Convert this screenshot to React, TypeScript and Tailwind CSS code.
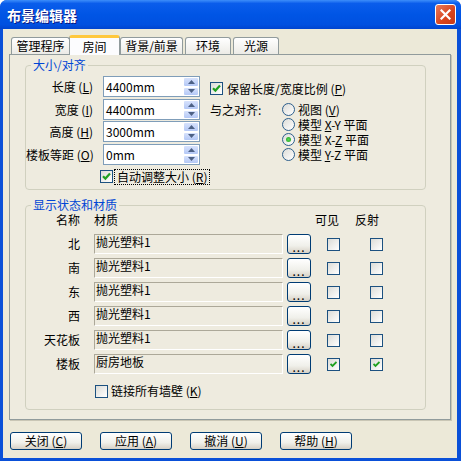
import React from 'react';

// XP-стиль: общие куски
function CheckBox({ checked = false, small = false }: { checked?: boolean; small?: boolean }) {
  return (
    <span className="w-[13px] h-[13px] shrink-0 border border-[#1C5180] bg-[linear-gradient(135deg,#DCDCD7,#FFFFFF)] flex items-center justify-center">
      {checked &&
        (small ? (
          <svg width="7" height="7" viewBox="0 0 7 7">
            <path d="M0.5 3 L2.5 5 L6.5 1" stroke="#21A121" strokeWidth="1.8" fill="none" />
          </svg>
        ) : (
          <svg width="9" height="9" viewBox="0 0 9 9">
            <path d="M1 4.2 L3.4 6.6 L8 1.6" stroke="#21A121" strokeWidth="2.2" fill="none" />
          </svg>
        ))}
    </span>
  );
}

function Radio({ checked = false }: { checked?: boolean }) {
  return (
    <span className="w-[13px] h-[13px] shrink-0 rounded-full border border-[#2C5E8C] bg-[linear-gradient(135deg,#DCDCD7,#FFFFFF)] flex items-center justify-center">
      {checked && <span className="w-[5px] h-[5px] rounded-full bg-[radial-gradient(circle,#55D855,#21A121)]" />}
    </span>
  );
}

function Arrow({ up }: { up?: boolean }) {
  return (
    <svg width="7" height="4" viewBox="0 0 7 4">
      <path d={up ? 'M0 4 L3.5 0 L7 4 Z' : 'M0 0 L3.5 4 L7 0 Z'} fill="#4D6185" />
    </svg>
  );
}

function SpinField({ value }: { value: string }) {
  return (
    <div className="w-[97px] h-[21px] border border-[#7F9DB9] bg-white flex">
      <span className="flex-1 pl-[2px] leading-[19px]">{value}</span>
      <div className="w-[16px] flex flex-col">
        <span className="flex-1 rounded-[2px] border border-white bg-[linear-gradient(to_bottom,#D7E2FC,#B4C8F6)] flex items-center justify-center">
          <Arrow up />
        </span>
        <span className="flex-1 rounded-[2px] border border-white bg-[linear-gradient(to_bottom,#D7E2FC,#B4C8F6)] flex items-center justify-center">
          <Arrow />
        </span>
      </div>
    </div>
  );
}

function XpButton({ children, className = '' }: { children: React.ReactNode; className?: string }) {
  return (
    <button
      className={`rounded-[3px] border border-[#003C74] bg-[linear-gradient(to_bottom,#FFFFFF,#F0F0EA_60%,#D6D0C5)] text-black flex items-center justify-center ${className}`}
    >
      {children}
    </button>
  );
}

function Label({ text, k }: { text: string; k: string }) {
  return (
    <span>
      {text} (<u>{k}</u>)
    </span>
  );
}

const sizeRows = [
  { text: '长度', k: 'L', value: '4400mm', mt: 'mt-[2px]' },
  { text: '宽度', k: 'I', value: '4400mm', mt: 'mt-[2px]' },
  { text: '高度', k: 'H', value: '3000mm', mt: 'mt-[1px]' },
  { text: '楼板等距', k: 'O', value: '0mm', mt: 'mt-[2px]' },
];

const materials = [
  { name: '北', mat: '抛光塑料1' },
  { name: '南', mat: '抛光塑料1' },
  { name: '东', mat: '抛光塑料1' },
  { name: '西', mat: '抛光塑料1' },
  { name: '天花板', mat: '抛光塑料1' },
  { name: '楼板', mat: '厨房地板', on: true },
];

const tabs = [
  { label: '管理程序', cls: 'ml-[2px] w-[59px]' },
  { label: '房间', cls: '-ml-[1px] w-[51px]', active: true },
  { label: '背景/前景', cls: 'w-[63px]' },
  { label: '环境', cls: 'ml-[2px] w-[46px]' },
  { label: '光源', cls: 'ml-[2px] w-[46px]' },
];

export default function App() {
  return (
    <div className="w-[461px] h-[461px] flex flex-col bg-[#0A50D8] rounded-t-[7px] overflow-hidden text-[12px] leading-[14px] text-black font-['Noto_Sans_CJK_SC','Noto_Sans',sans-serif]">
      {/* Заголовок */}
      <div className="h-[29px] shrink-0 flex items-center pl-[7px] pr-[5px] bg-[linear-gradient(to_bottom,#3D8EFA_0%,#0A5DEB_12%,#0055E5_50%,#0050E0_85%,#0044CF_100%)]">
        <span className="text-white font-bold text-[14px] leading-none [text-shadow:1px_1px_0_#0A1883]">布景编辑器</span>
        <div className="ml-auto w-[21px] h-[21px] rounded-[3px] border border-white bg-[linear-gradient(135deg,#E87A5C,#D8431C_60%,#C63A18)] flex items-center justify-center">
          <svg width="11" height="11" viewBox="0 0 11 11">
            <path d="M1.5 1.5 L9.5 9.5 M9.5 1.5 L1.5 9.5" stroke="white" strokeWidth="2.2" strokeLinecap="square" />
          </svg>
        </div>
      </div>

      {/* Тело окна */}
      <div className="flex-1 ml-[3px] mr-[4px] mb-[3px] bg-[#ECE9D8] pt-[6px] pl-[6px] flex flex-col">
        {/* Вкладки */}
        <div className="flex items-end">
          {tabs.map((t) =>
            t.active ? (
              <div
                key={t.label}
                className={`relative z-10 -mb-[1px] h-[20px] rounded-t-[3px] border border-b-0 border-[#919B9C] border-t-[3px] border-t-[#FFC83C] bg-[#FCFCFE] flex items-center justify-center leading-none ${t.cls}`}
              >
                {t.label}
              </div>
            ) : (
              <div
                key={t.label}
                className={`h-[17px] rounded-t-[3px] border border-b-0 border-[#919B9C] bg-[linear-gradient(to_bottom,#FFFFFF,#ECEBE6)] flex items-center justify-center leading-none ${t.cls}`}
              >
                {t.label}
              </div>
            )
          )}
        </div>

        {/* Панель вкладки */}
        <div className="w-[442px] h-[366px] shrink-0 border border-[#919B9C] bg-[#EEEBDF] shadow-[1px_1px_0_#C9C6B5] pt-[3px] pl-[15px]">
          {/* Размер/выравнивание */}
          <fieldset className="w-[401px] border border-[#D0D0BF] rounded-[4px] pt-[2px] pb-[4px]">
            <legend className="ml-[5px] px-[2px] text-[#0046D5] leading-[14px]">大小/对齐</legend>
            <div className="flex">
              <div className="w-[174px] flex flex-col">
                {sizeRows.map((r) => (
                  <div key={r.k} className={`h-[21px] flex items-center ${r.mt}`}>
                    <span className="w-[67px] text-right whitespace-nowrap">
                      <Label text={r.text} k={r.k} />
                    </span>
                    <span className="ml-[10px]">
                      <SpinField value={r.value} />
                    </span>
                  </div>
                ))}
                <div className="mt-[3px] h-[17px] flex items-center pl-[74px]">
                  <CheckBox checked />
                  <span className="ml-[1px] px-[2px] border border-dotted border-black leading-[14px] whitespace-nowrap">
                    <Label text="自动调整大小" k="R" />
                  </span>
                </div>
              </div>

              <div className="ml-[10px] flex flex-col">
                <div className="mt-[8px] h-[13px] flex items-center">
                  <CheckBox checked />
                  <span className="ml-[4px] whitespace-nowrap">
                    <Label text="保留长度/宽度比例" k="P" />
                  </span>
                </div>
                <div className="mt-[7px] flex">
                  <span className="w-[72px] h-[15px] leading-[15px]">与之对齐:</span>
                  <div className="flex flex-col">
                    <div className="h-[15px] flex items-center gap-[3px]">
                      <Radio />
                      <Label text="视图" k="V" />
                    </div>
                    <div className="h-[15px] flex items-center gap-[3px]">
                      <Radio />
                      <span>
                        模型 <u>X</u>-Y 平面
                      </span>
                    </div>
                    <div className="h-[15px] flex items-center gap-[3px]">
                      <Radio checked />
                      <span>
                        模型 X-<u>Z</u> 平面
                      </span>
                    </div>
                    <div className="h-[15px] flex items-center gap-[3px]">
                      <Radio />
                      <span>
                        模型 <u>Y</u>-Z 平面
                      </span>
                    </div>
                  </div>
                </div>
              </div>
            </div>
          </fieldset>

          {/* Видимость и материалы */}
          <fieldset className="mt-[8px] w-[401px] border border-[#D0D0BF] rounded-[4px] pb-[10px]">
            <legend className="ml-[5px] px-[2px] text-[#0046D5] leading-[14px]">显示状态和材质</legend>
            <div className="h-[16px] flex items-center">
              <span className="w-[54px] text-right">名称</span>
              <span className="ml-[14px] w-[221px]">材质</span>
              <span className="w-[40px]">可见</span>
              <span>反射</span>
            </div>
            <div className="mt-[6px] flex flex-col gap-[4px]">
              {materials.map((m) => (
                <div key={m.name} className="h-[20px] flex items-center">
                  <span className="w-[54px] text-right">{m.name}</span>
                  <div className="ml-[14px] w-[189px] h-[20px] border border-[#ACA899] border-r-white border-b-white pl-[1px] leading-[14px]">
                    {m.mat}
                  </div>
                  <XpButton className="ml-[4px] w-[24px] h-[20px] leading-none pt-[5px] tracking-[1px]">...</XpButton>
                  <span className="ml-[16px]">
                    <CheckBox checked={m.on} small />
                  </span>
                  <span className="ml-[30px]">
                    <CheckBox checked={m.on} small />
                  </span>
                </div>
              ))}
            </div>
            <div className="mt-[9px] h-[16px] flex items-center pl-[69px]">
              <CheckBox />
              <span className="ml-[3px]">
                <Label text="链接所有墙壁" k="K" />
              </span>
            </div>
          </fieldset>
        </div>

        {/* Кнопки */}
        <div className="mt-[12px] ml-[1px] flex gap-[18px]">
          <XpButton className="w-[72px] h-[18px] leading-none">
            <Label text="关闭" k="C" />
          </XpButton>
          <XpButton className="w-[72px] h-[18px] leading-none">
            <Label text="应用" k="A" />
          </XpButton>
          <XpButton className="w-[72px] h-[18px] leading-none">
            <Label text="撤消" k="U" />
          </XpButton>
          <XpButton className="w-[72px] h-[18px] leading-none">
            <Label text="帮助" k="H" />
          </XpButton>
        </div>
      </div>
    </div>
  );
}
